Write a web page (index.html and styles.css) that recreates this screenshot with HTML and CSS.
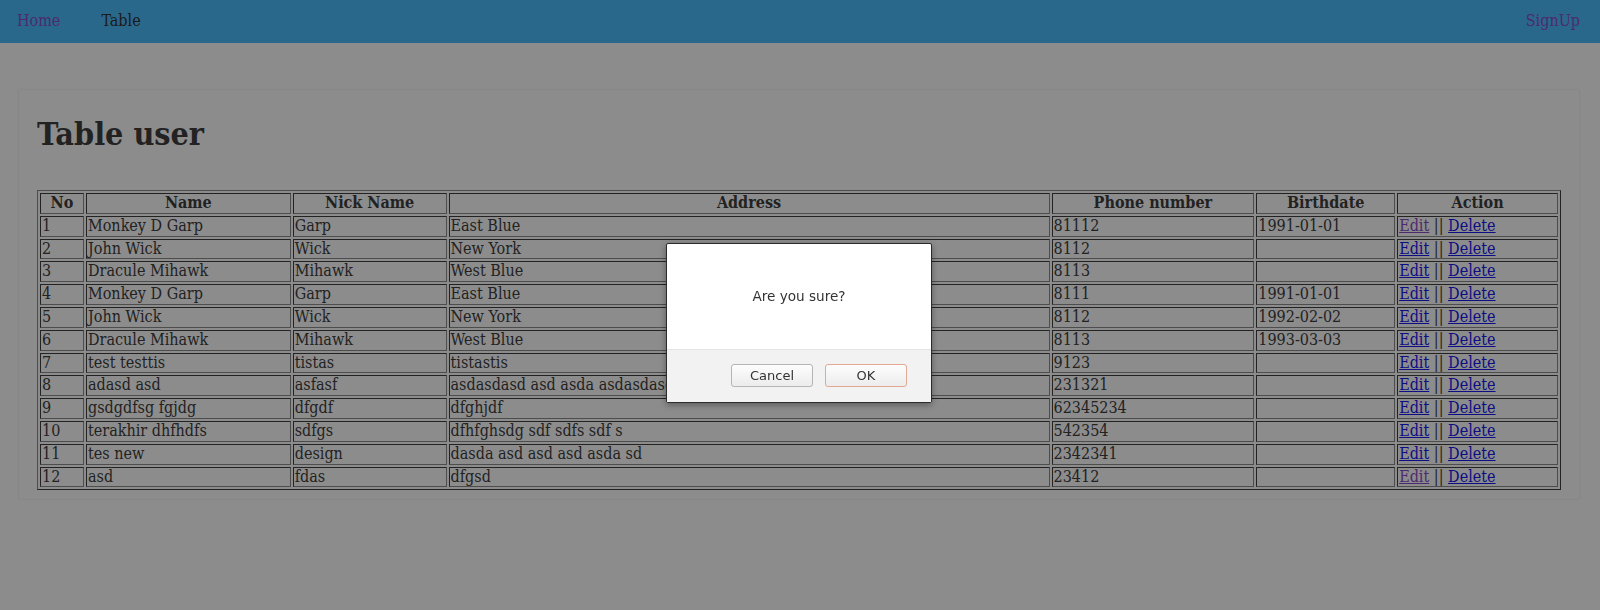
FILE: index.html
```html
<!DOCTYPE html>
<html lang="en">
<head>
  <meta charset="UTF-8">
  <title>Table user</title>
  <link rel="stylesheet" href="styles.css">
</head>
<body>

<nav class="navbar">
  <a class="nav-link visited" href="#">Home</a>
  <span class="nav-link current">Table</span>
  <a class="nav-link visited nav-right" href="#">SignUp</a>
</nav>

<div class="page">
  <div class="card">
    <h1>Table user</h1>

    <table class="users" border="1">
      <tr>
        <th class="c-no">No</th>
        <th class="c-name">Name</th>
        <th class="c-nick">Nick Name</th>
        <th class="c-addr">Address</th>
        <th class="c-phone">Phone number</th>
        <th class="c-birth">Birthdate</th>
        <th class="c-action">Action</th>
      </tr>
      <tr><td>1</td><td>Monkey D Garp</td><td>Garp</td><td>East Blue</td><td>81112</td><td>1991-01-01</td><td><a class="visited" href="#">Edit</a> || <a href="#">Delete</a></td></tr>
      <tr><td>2</td><td>John Wick</td><td>Wick</td><td>New York</td><td>8112</td><td></td><td><a href="#">Edit</a> || <a href="#">Delete</a></td></tr>
      <tr><td>3</td><td>Dracule Mihawk</td><td>Mihawk</td><td>West Blue</td><td>8113</td><td></td><td><a href="#">Edit</a> || <a href="#">Delete</a></td></tr>
      <tr><td>4</td><td>Monkey D Garp</td><td>Garp</td><td>East Blue</td><td>8111</td><td>1991-01-01</td><td><a href="#">Edit</a> || <a href="#">Delete</a></td></tr>
      <tr><td>5</td><td>John Wick</td><td>Wick</td><td>New York</td><td>8112</td><td>1992-02-02</td><td><a href="#">Edit</a> || <a href="#">Delete</a></td></tr>
      <tr><td>6</td><td>Dracule Mihawk</td><td>Mihawk</td><td>West Blue</td><td>8113</td><td>1993-03-03</td><td><a href="#">Edit</a> || <a href="#">Delete</a></td></tr>
      <tr><td>7</td><td>test testtis</td><td>tistas</td><td>tistastis</td><td>9123</td><td></td><td><a href="#">Edit</a> || <a href="#">Delete</a></td></tr>
      <tr><td>8</td><td>adasd asd</td><td>asfasf</td><td>asdasdasd asd asda asdasdasd asd</td><td>231321</td><td></td><td><a href="#">Edit</a> || <a href="#">Delete</a></td></tr>
      <tr><td>9</td><td>gsdgdfsg fgjdg</td><td>dfgdf</td><td>dfghjdf</td><td>62345234</td><td></td><td><a href="#">Edit</a> || <a href="#">Delete</a></td></tr>
      <tr><td>10</td><td>terakhir dhfhdfs</td><td>sdfgs</td><td>dfhfghsdg sdf sdfs sdf s</td><td>542354</td><td></td><td><a href="#">Edit</a> || <a href="#">Delete</a></td></tr>
      <tr><td>11</td><td>tes new</td><td>design</td><td>dasda asd asd asd asda sd</td><td>2342341</td><td></td><td><a href="#">Edit</a> || <a href="#">Delete</a></td></tr>
      <tr><td>12</td><td>asd</td><td>fdas</td><td>dfgsd</td><td>23412</td><td></td><td><a class="visited" href="#">Edit</a> || <a href="#">Delete</a></td></tr>
    </table>
  </div>
</div>

<div class="overlay"></div>

<div class="dialog">
  <div class="dialog-body">Are you sure?</div>
  <div class="dialog-footer">
    <button class="btn">Cancel</button>
    <button class="btn btn-default">OK</button>
  </div>
</div>

</body>
</html>
```

FILE: styles.css
```css
body {
  margin: 0;
  font-family: "DejaVu Serif Condensed", "DejaVu Serif", serif;
  font-size: 16px;
  color: #2a2a2a;
  background: #fff;
}
a {
  color: #0000ee;
}
a.visited {
  color: #7f3ac4;
}

/* top bar */
.navbar {
  display: flex;
  align-items: center;
  gap: 41px;
  height: 43px;
  padding: 0 20px 0 17px;
  background-color: #3ab6fc;
  box-sizing: border-box;
}
.nav-link {
  text-decoration: none;
  line-height: 19px;
  margin-top: -2px;
}
.nav-link.current {
  color: #1a1a1a;
}
.nav-right {
  margin-left: auto;
}

/* content */
.page {
  padding: 46px 20px 0 18px;
}
.card {
  border: 1px solid #f4f4f4;
  border-radius: 3px;
  padding: 5px 18px 9px;
  box-shadow: 0 0 2px rgba(0, 0, 0, 0.08);
}
.card h1 {
  font-size: 32px;
  line-height: 37px;
  margin: 21px 0 37px;
}

.users {
  border-spacing: 2px;
  border: 1px outset #808080;
}
.users th,
.users td {
  padding: 0 1px;
  line-height: 18.8px;
  box-sizing: border-box;
  border: 1px inset #808080;
}
.users td {
  text-align: left;
}
.c-no { width: 44px; }
.c-name { width: 205px; }
.c-nick { width: 154px; }
.c-addr { width: 602px; }
.c-phone { width: 203px; }
.c-birth { width: 139px; }
.c-action { width: 161px; }

/* confirm prompt */
.overlay {
  position: fixed;
  top: 0;
  right: 0;
  bottom: 0;
  left: 0;
  background: hsla(0, 0%, 10%, 0.5);
}
.dialog {
  position: absolute;
  top: 243px;
  left: 50%;
  width: 266px;
  margin-left: -134px;
  box-sizing: border-box;
  background: #fff;
  border: 1px solid #2b2b2b;
  border-radius: 2px;
  box-shadow: 0 2px 6px rgba(0, 0, 0, 0.35);
  font-family: "DejaVu Sans", sans-serif;
  color: #333;
}
.dialog-body {
  height: 105px;
  padding-top: 44px;
  box-sizing: border-box;
  text-align: center;
  font-size: 13.6px;
}
.dialog-footer {
  display: flex;
  justify-content: flex-end;
  gap: 12px;
  height: 53px;
  padding: 14px 24px 0 0;
  box-sizing: border-box;
  background: #f2f2f2;
  border-top: 1px solid #e4e4e4;
}
.btn {
  width: 82px;
  height: 23px;
  padding: 0;
  font-family: "DejaVu Sans", sans-serif;
  font-size: 13px;
  color: #333;
  background: linear-gradient(#fdfdfd, #ececec);
  border: 1px solid #b5b5b5;
  border-radius: 3px;
}
.btn-default {
  border-color: #e3a793;
}
```
